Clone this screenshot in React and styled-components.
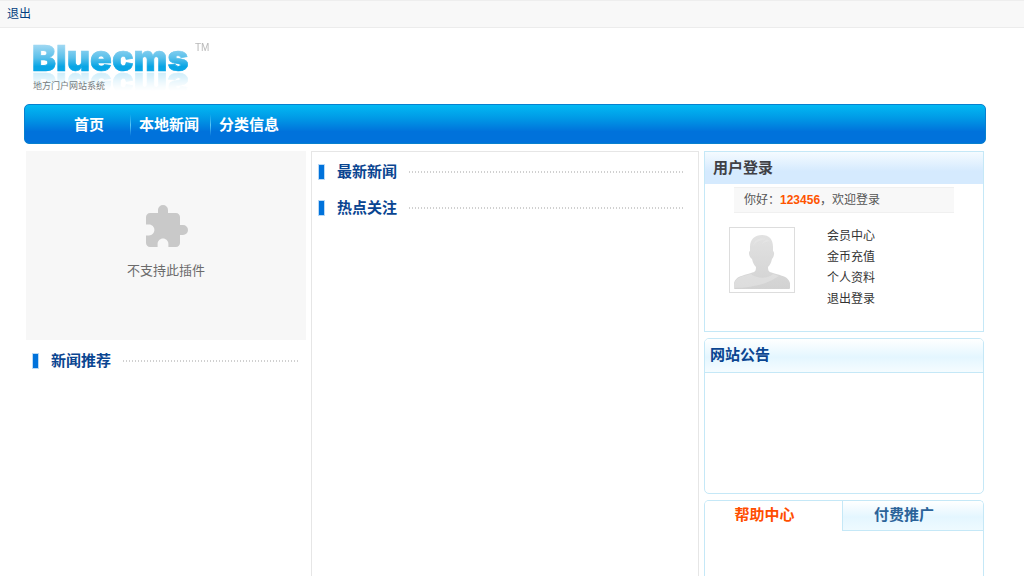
import styled, { createGlobalStyle } from "styled-components";
import { MdExtension } from "react-icons/md";

const GlobalStyle = createGlobalStyle`
  *, *::before, *::after {
    box-sizing: border-box;
  }

  body {
    margin: 0;
    background: #fff;
    color: #333;
    font-family: "Liberation Sans", "Noto Sans CJK SC", sans-serif;
    font-size: 12px;
  }

  h2, ul, p {
    margin: 0;
    padding: 0;
  }

  ul {
    list-style: none;
  }

  a {
    color: inherit;
    text-decoration: none;
  }
`;

const Page = styled.div`
  display: flex;
  flex-direction: column;
  min-height: 100vh;
`;

const TopBar = styled.div`
  height: 28px;
  padding: 0 7px;
  color: #023e80;
  line-height: 26px;
  background: #f8f8f8;
  border-top: 1px solid #eee;
  border-bottom: 1px solid #ececec;
`;

const Wrapper = styled.div`
  display: flex;
  flex: 1;
  flex-direction: column;
  padding: 0 38px 0 24px;
`;

const Logo = styled.a`
  display: block;
  height: 76px;
  padding: 12px 0 0 8px;

  .mark {
    display: block;
    height: 32px;
    overflow: visible;
    -webkit-box-reflect: below 0 linear-gradient(transparent 40%, rgba(0, 0, 0, 0.2));
  }

  .name {
    font-family: Inter, "Liberation Sans", sans-serif;
    font-size: 36px;
    font-weight: 900;
  }

  .tm {
    font-size: 10px;
    fill: #b8b8b8;
  }

  span {
    display: block;
    margin-top: 8px;
    padding-left: 1px;
    color: #777;
    font-size: 9px;
    line-height: 12px;
  }
`;

const Nav = styled.nav`
  display: flex;
  align-items: center;
  height: 40px;
  padding: 2px 0 0 24px;
  border: 1px solid #0780cf;
  border-radius: 5px;
  background: linear-gradient(#02b9f3, #0099e6 35%, #0072db 70%, #0072db);
`;

const NavLink = styled.a`
  padding: 0 11px 0 9px;
  color: #fff;
  font-size: 15px;
  font-weight: 700;
  line-height: 22px;
  background: linear-gradient(transparent, #5ac8f5 50%, transparent) left / 1px 100% no-repeat;

  &:first-child {
    padding: 0 26px 0 25px;
    background: none;
  }
`;

const Columns = styled.main`
  display: grid;
  flex: 1;
  grid-template-columns: 280px 1fr 280px;
  gap: 5px;
  padding: 7px 2px 0;
`;

const NewsColumn = styled.section`
  border: 1px solid #e6e6e6;
  border-bottom: 0;
`;

const Plugin = styled.div`
  display: flex;
  flex-direction: column;
  align-items: center;
  height: 189px;
  padding-top: 52px;
  color: #6b6b6b;
  font-size: 13px;
  line-height: 20px;
  background: #f7f7f7;

  svg {
    margin-bottom: 10px;
    color: #c9c9c9;
  }
`;

const TitleRow = styled.div`
  display: flex;
  align-items: center;
  height: 36px;
  padding: 0 ${(props) => props.$end}px 0 6px;

  &:first-child {
    margin-top: 2px;
  }

  ${Plugin} + & {
    margin-top: 3px;
  }

  &::before {
    content: "";
    width: 7px;
    height: 16px;
    margin-right: 12px;
    background: #0072db;
    border: 1px solid #b9d9f6;
  }

  &::after {
    content: "";
    flex: 1;
    height: 2px;
    margin-left: 12px;
    background: repeating-linear-gradient(90deg, #d0d0d0 0 1px, #fff 1px 3px);
  }
`;

const Title = styled.h2`
  color: ${(props) => props.$color || "#0a4591"};
  font-size: 15px;
  font-weight: 700;
  line-height: 20px;
`;

const Side = styled.aside`
  display: flex;
  flex-direction: column;
  gap: 6px;
`;

const Panel = styled.section`
  border: 1px solid #c5e8f7;
  border-radius: ${(props) => (props.$square ? 0 : 5)}px;
  overflow: hidden;
`;

const LoginPanel = styled(Panel)`
  height: 181px;
`;

const NoticePanel = styled(Panel)`
  height: 156px;
`;

const HelpPanel = styled(Panel)`
  flex: 1;
  border-bottom: 0;
  border-radius: 5px 5px 0 0;
`;

const LoginHead = styled.div`
  padding: 6px 8px;
  background: linear-gradient(#f5fbff, #d5eafe 60%);
`;

const NoticeHead = styled.div`
  padding: 6px 5px 7px;
  background: linear-gradient(#fff, #e4f6ff 55%, #f5fcff);
  border-bottom: 1px solid #c5e8f7;
`;

const Greeting = styled.p`
  height: 26px;
  margin: 3px 29px 0;
  padding-left: 10px;
  color: #555;
  line-height: 24px;
  background: #f8f8f8;
  border-top: 1px solid #f0f0f0;
  border-bottom: 1px solid #f0f0f0;

  strong {
    color: #ff5400;
  }
`;

const Member = styled.div`
  display: flex;
  gap: 32px;
  padding: 14px 24px 0;
`;

const Avatar = styled.svg`
  width: 66px;
  height: 66px;
  border: 1px solid #ddd;
`;

const MemberLinks = styled.ul`
  margin-top: -1px;
  line-height: 21px;
`;

const Tabs = styled.div`
  display: grid;
  grid-template-columns: 137px 1fr;
`;

const Tab = styled.button`
  height: 30px;
  padding: 0 18px 2px 0;
  color: ${(props) => (props.$active ? "#ff4e00" : "#2b6399")};
  font: inherit;
  font-size: 15px;
  font-weight: 700;
  line-height: 20px;
  border: 0;
  background: ${(props) => (props.$active ? "#fff" : "linear-gradient(#fff, #e4f6ff 55%, #eefaff)")};
  border-left: ${(props) => (props.$active ? "0" : "1px solid #c5e8f7")};
  border-bottom: ${(props) => (props.$active ? "0" : "1px solid #c5e8f7")};
`;

const memberLinks = ["会员中心", "金币充值", "个人资料", "退出登录"];
const navLinks = ["首页", "本地新闻", "分类信息"];

const App = () => {
  return (
    <>
      <GlobalStyle />
      <Page>
        <TopBar>
          <a href="#logout">退出</a>
        </TopBar>
        <Wrapper>
          <Logo href="#home">
            <svg className="mark" width="180" height="32">
              <defs>
                <linearGradient id="sky" x1="0" y1="4" x2="0" y2="32" gradientUnits="userSpaceOnUse">
                  <stop offset="0" stopColor="#a5daf3" />
                  <stop offset="0.5" stopColor="#58bfea" />
                  <stop offset="0.8" stopColor="#08a5e5" />
                  <stop offset="1" stopColor="#08a5e5" />
                </linearGradient>
              </defs>
              <text className="name" x="0" y="31" fill="url(#sky)" stroke="url(#sky)" strokeWidth="0.6">
                Bluecms
              </text>
              <text className="tm" x="163" y="11">TM</text>
            </svg>
            <span>地方门户网站系统</span>
          </Logo>
          <Nav>
            {navLinks.map((name) => (
              <NavLink href="#nav" key={name}>{name}</NavLink>
            ))}
          </Nav>
          <Columns>
            <section>
              <Plugin>
                <MdExtension size={48} />
                不支持此插件
              </Plugin>
              <TitleRow $end={6}>
                <Title>新闻推荐</Title>
              </TitleRow>
            </section>
            <NewsColumn>
              <TitleRow $end={13}>
                <Title>最新新闻</Title>
              </TitleRow>
              <TitleRow $end={13}>
                <Title>热点关注</Title>
              </TitleRow>
            </NewsColumn>
            <Side>
              <LoginPanel $square>
                <LoginHead>
                  <Title $color="#404045">用户登录</Title>
                </LoginHead>
                <Greeting>
                  你好：<strong>123456</strong>，欢迎登录
                </Greeting>
                <Member>
                  <Avatar viewBox="0 0 64 64" role="img" aria-label="头像">
                    <defs>
                      <linearGradient id="grey" x1="0" y1="0" x2="0" y2="1">
                        <stop offset="0" stopColor="#e2e2e2" />
                        <stop offset="1" stopColor="#d2d2d2" />
                      </linearGradient>
                    </defs>
                    <path
                      fill="url(#grey)"
                      d="M32 7c-7 0-12 4-12 12v4c-2 1-1 6 2 8 1 4 2 6 4 8 0 4-1 5-5 6-9 3-15 3-17 10v5q0 1 1 1h54q1 0 1-1v-5c-2-7-8-7-17-10-4-1-5-2-5-6 2-2 3-4 4-8 2-2 3-7 1-8v-4c0-8-4-12-11-12z"
                    />
                    <path
                      fill="#e8e8e8"
                      d="M23 18c3-4 8-7 16-7-4 1-7 3-7 5 4-2 7-3 9-2-5-6-17-5-18 4zM4 56c2-7 8-8 17-10 7 5 16 5 22 0l6 2c-10 7-24 12-45 12z"
                      opacity=".5"
                    />
                  </Avatar>
                  <MemberLinks>
                    {memberLinks.map((name) => (
                      <li key={name}><a href="#member">{name}</a></li>
                    ))}
                  </MemberLinks>
                </Member>
              </LoginPanel>
              <NoticePanel>
                <NoticeHead>
                  <Title>网站公告</Title>
                </NoticeHead>
              </NoticePanel>
              <HelpPanel>
                <Tabs>
                  <Tab type="button" $active>帮助中心</Tab>
                  <Tab type="button">付费推广</Tab>
                </Tabs>
              </HelpPanel>
            </Side>
          </Columns>
        </Wrapper>
      </Page>
    </>
  );
};

export default App;
